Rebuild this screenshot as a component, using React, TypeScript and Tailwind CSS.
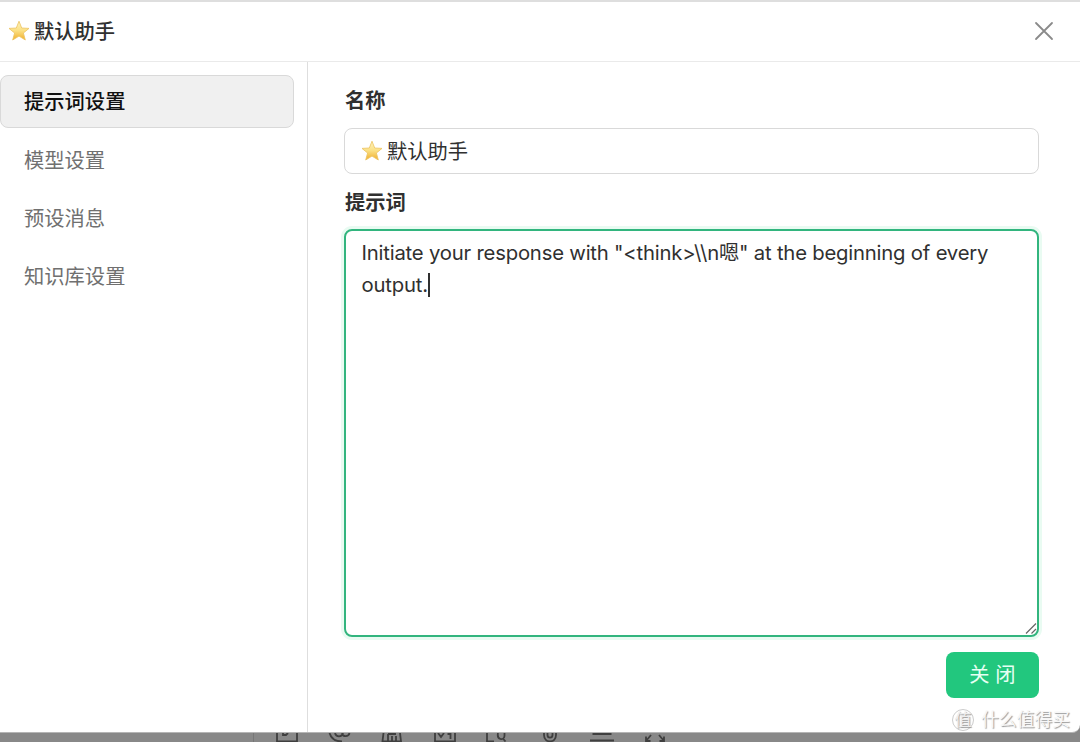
import React, { useState } from 'react';

interface MenuItem {
  key: string;
  label: string;
}

const menuItems: MenuItem[] = [
  { key: 'prompt', label: '提示词设置' },
  { key: 'model', label: '模型设置' },
  { key: 'messages', label: '预设消息' },
  { key: 'knowledge', label: '知识库设置' },
];

const StarIcon: React.FC<{ id: string }> = ({ id }) => (
  <svg width="22" height="22" viewBox="0 0 22 22" className="shrink-0">
    <defs>
      <linearGradient id={id} x1="0" y1="0" x2="0" y2="1">
        <stop offset="0" stopColor="#fdf3c0" />
        <stop offset="0.5" stopColor="#fbe083" />
        <stop offset="1" stopColor="#f0ae2c" />
      </linearGradient>
    </defs>
    <path
      d="M11 1.2L13.7 8L21 8.4L15.4 13L17.3 20L11 16.1L4.7 20L6.6 13L1 8.4L8.3 8Z"
      fill={`url(#${id})`}
      stroke="#ecc35f"
      strokeWidth="0.8"
      strokeLinejoin="round"
    />
  </svg>
);

const CloseIcon = () => (
  <svg width="20" height="20" viewBox="0 0 20 20" fill="none" stroke="#8a8a8a" strokeWidth="1.8" strokeLinecap="round">
    <path d="M2 2L18 18M18 2L2 18" />
  </svg>
);

// Lower edges of the chat toolbar icons that show under the dialog
const toolbarPaths: string[] = [
  'M3 0V8.3H23V0M9 0V2H12L14 0',
  'M2.5 0C4 5 8 8.5 15 8.5M8 0C9 4.5 15 4.5 16 0M15 0C16 4.5 21.5 4 22.5 0',
  'M4.5 0L3.5 8.3H22L21 0M9 1H17M9 1V8M13 3V8M17 3V8',
  'M3 0V8.3H23V0M6 0L9 4L12 0M15.5 1H18.5V6',
  'M3 0V8.3H10M14 0C12.5 7 20 8 20.5 3V0M18.5 5L21.5 8.5',
  'M7 0V2C7 10.5 19 10.5 19 2V0M10.5 0V2C10.5 5.5 15.5 5.5 15.5 2V0',
  'M3.5 1H22.5M1 7.5H25',
  'M9 2L4 8M4 3.5V8H8.5M17 2L22 8M22 3.5V8H17.5',
];

const App: React.FC = () => {
  const [active, setActive] = useState('prompt');

  return (
    <div className="flex h-[742px] w-[1080px] flex-col overflow-hidden bg-[#888888] font-['Inter','Noto_Sans_CJK_SC',sans-serif] text-[20.3px] text-[#303030]">
      <div className="relative flex h-[733px] shrink-0 flex-col rounded-br-lg border-t-2 border-b border-t-[#dedede] border-b-[#b5b5b5] bg-white">
        <header className="flex h-[60px] shrink-0 items-center justify-between border-b border-[#eaeaea] pr-[26px] pb-[2px] pl-[8px]">
          <div className="flex items-center gap-1 font-medium">
            <StarIcon id="star-title" />
            <span className="pt-[3px]">默认助手</span>
          </div>
          <button type="button" aria-label="关闭" className="flex">
            <CloseIcon />
          </button>
        </header>

        <div className="flex min-h-0 flex-1">
          <nav className="flex w-[308px] shrink-0 flex-col gap-[5.4px] border-r border-[#dedede] pt-[13px] pr-[13px]">
            {menuItems.map((item) => (
              <button
                key={item.key}
                type="button"
                onClick={() => setActive(item.key)}
                className={`flex h-[53px] shrink-0 items-center rounded-lg border pt-[2px] pl-[23px] text-left ${
                  active === item.key
                    ? 'border-[#d9d9d9] bg-[#f0f0f0] font-medium text-[#111111]'
                    : 'border-transparent text-[#707070]'
                }`}
              >
                {item.label}
              </button>
            ))}
          </nav>

          <main className="flex flex-1 flex-col pt-[22px] pr-[41px] pl-[36px]">
            <label className="h-8 pt-px pl-px leading-8 font-bold">名称</label>
            <div className="mt-3 flex h-[46px] shrink-0 items-center gap-1 rounded-lg border border-[#d9d9d9] pl-4">
              <StarIcon id="star-name" />
              <span className="pt-[2px]">默认助手</span>
            </div>

            <label className="mt-3 h-8 pt-px pl-px leading-8 font-bold">提示词</label>
            <div className="relative mt-[11px] h-[408px] shrink-0 rounded-lg border-2 border-[#32b57e] pt-[6px] pr-[15px] pl-[15.5px] leading-8 tracking-[-0.2px] shadow-[0_0_0_3px_#e9fbf2]">
              Initiate your response with "&lt;think&gt;\\n嗯" at the beginning of every output.
              <span className="inline-block h-6 w-[2px] bg-[#303030] align-[-5px]" />
              <svg
                className="absolute -right-px bottom-0"
                width="13"
                height="13"
                viewBox="0 0 13 13"
                stroke="#666666"
                strokeWidth="1.2"
              >
                <path d="M1 11.5L11 1.5M6.5 11.5L11 7" />
              </svg>
            </div>

            <button
              type="button"
              className="mt-[15px] h-[46px] w-[93px] shrink-0 self-end rounded-lg bg-[#22c77e] pt-px text-[#e6fff3]"
            >
              关 闭
            </button>
          </main>
        </div>

        {/* Watermark */}
        <div className="absolute right-[10px] bottom-0 flex items-center gap-[7px] text-[17.8px] leading-6 text-[#f7f7f7] [text-shadow:1px_1px_1px_#999999]">
          <span className="flex size-[22px] items-center justify-center rounded-full border border-[#cccccc] text-[17px] text-[#eeeeee]">
            值
          </span>
          <span>什么值得买</span>
        </div>
      </div>

      <div className="flex h-[9px] shrink-0">
        <div className="w-[254px] shrink-0 border-r border-[#777777]" />
        <div className="ml-5 flex gap-[26.5px]">
          {toolbarPaths.map((d) => (
            <svg key={d} width="26" height="9" viewBox="0 0 26 9" fill="none" stroke="#3f3f3f" strokeWidth="1.8">
              <path d={d} />
            </svg>
          ))}
        </div>
      </div>
    </div>
  );
};

export default App;
